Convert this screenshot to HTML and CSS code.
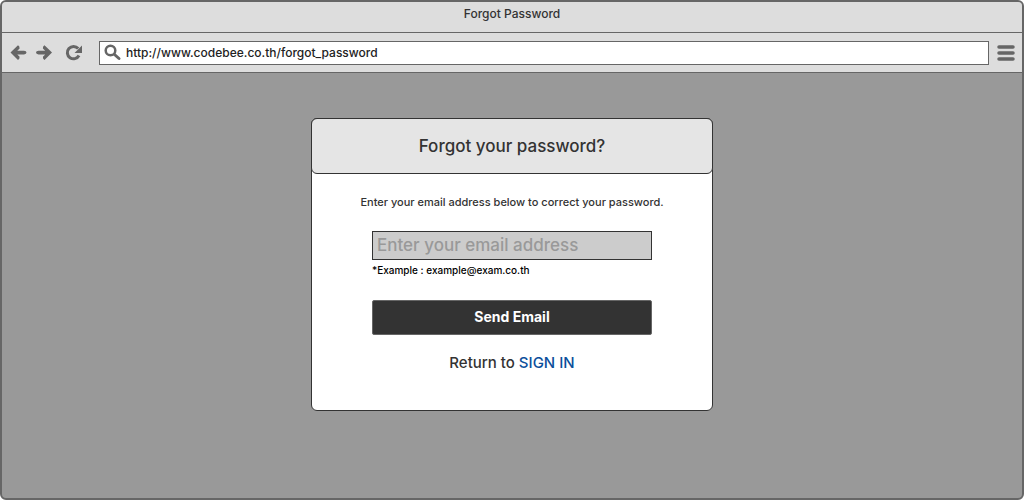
FILE: index.html
```
<!DOCTYPE html>
<html lang="en">
<head>
<meta charset="utf-8">
<title>Forgot Password</title>
<link rel="stylesheet" href="styles.css">
</head>
<body>
<div class="browser">
  <header class="titlebar">Forgot Password</header>
  <nav class="toolbar">
    <button class="tool" type="button" aria-label="Back">
      <svg width="18" height="18" viewBox="0 0 18 18"><path class="solid" d="M1.500 8.500 9 1.200q1.800 1 1.600 3.200L8.300 6.700H15q2.500.2 2.500 1.800T15 10.500H8.300l2.300 2.200q.2 2.200-1.600 3.200z"/></svg>
    </button>
    <button class="tool" type="button" aria-label="Forward">
      <svg width="18" height="18" viewBox="0 0 18 18"><path class="solid" d="M17 8.500 9.500 1.200q-1.800 1-1.600 3.200l2.300 2.300H3.500Q1 6.900 1 8.500t2.500 2h6.700l-2.300 2.200q-.2 2.200 1.600 3.200z"/></svg>
    </button>
    <button class="tool reload" type="button" aria-label="Reload">
      <svg width="18" height="18" viewBox="0 0 18 18"><path class="ring" d="M13.200 4.500A6.200 6.200 0 1 0 14 11.500"/><path class="solid" d="M17 1.500V9H9.500z"/></svg>
    </button>
    <label class="address">
      <svg width="18" height="18" viewBox="0 0 18 18"><circle class="lens" cx="6.500" cy="6.500" r="4.800"/><path class="handle" d="m10.500 10.500 4.500 4"/></svg>
      <input class="url" type="text" aria-label="Address" value="http://www.codebee.co.th/forgot_password">
    </label>
    <button class="tool" type="button" aria-label="Menu">
      <svg width="18" height="18" viewBox="0 0 18 18"><path class="bars" d="M2 3h14M2 9h14M2 15h14"/></svg>
    </button>
  </nav>
  <main class="page">
    <section class="card">
      <h1 class="heading">Forgot your password?</h1>
      <form class="form">
        <p class="intro">Enter your email address below to correct your password.</p>
        <input class="email" id="email" type="email" placeholder="Enter your email address">
        <label class="hint" for="email">*Example : example@exam.co.th</label>
        <button class="send" type="button">Send Email</button>
        <p class="return">Return to <a class="link" href="#">SIGN IN</a></p>
      </form>
    </section>
  </main>
</div>
</body>
</html>
```
FILE: styles.css
```
* { box-sizing: border-box; }
body {
  margin: 0;
  font-family: Inter, "Open Sans", sans-serif;
  font-weight: 500;
  color: #333;
}
.browser {
  display: flex;
  flex-direction: column;
  min-height: 100vh;
  border: 2px solid #666;
  border-radius: 6px;
  background: #999;
  overflow: hidden;
}
.titlebar {
  height: 31px;
  padding-top: 3px;
  border-bottom: 1px solid #666;
  background: #ddd;
  font-size: 12px;
  line-height: 18px;
  text-align: center;
}
.toolbar {
  display: flex;
  align-items: center;
  gap: 8px;
  height: 40px;
  padding: 0 7px;
  border-bottom: 1px solid #666;
  background: #ddd;
}
.tool {
  display: flex;
  padding: 0;
  border: 0;
  background: none;
}
.reload { margin: 0 8px 0 4px; }
.ring, .lens, .handle, .bars { fill: none; stroke: #666; }
.ring { stroke-width: 3; }
.solid { fill: #666; }
.lens { stroke-width: 2.500; }
.handle { stroke-width: 3; stroke-linecap: round; }
.bars { stroke-width: 3.500; stroke-linecap: round; }
.address {
  display: flex;
  flex: 1;
  align-items: center;
  gap: 4px;
  height: 24px;
  padding: 0 4px;
  border: 1px solid #666;
  background: #fff;
}
.url {
  flex: 1;
  min-width: 0;
  padding: 0;
  border: 0;
  outline: 0;
  background: none;
  color: #222;
  font: inherit;
  font-size: 12px;
}
.page {
  display: flex;
  flex: 1;
  flex-direction: column;
  align-items: center;
  padding: 45px 16px;
}
.card {
  width: 100%;
  max-width: 402px;
  border: 1px solid #333;
  border-radius: 6px;
  background: #fff;
}
.heading {
  margin: -1px;
  padding: 15px 0;
  border: 1px solid #333;
  border-radius: 6px;
  background: #e5e5e5;
  font-size: 17px;
  font-weight: 500;
  line-height: 24px;
  text-align: center;
}
.form {
  display: flex;
  flex-direction: column;
  padding: 20px 60px 36px;
}
.intro {
  margin: 0 -40px 20px;
  font-size: 11px;
  line-height: 18px;
  text-align: center;
}
.email {
  width: 100%;
  height: 29px;
  padding: 0 4px 2px;
  border: 1px solid #333;
  border-radius: 0;
  background: #ccc;
  color: #333;
  font: inherit;
  font-size: 17px;
}
.email::placeholder { color: #999; opacity: 1; }
.hint {
  margin: 2px 0 22px;
  color: #000;
  font-size: 10px;
  line-height: 16px;
}
.send {
  height: 35px;
  padding: 0 0 2px;
  border: 1px solid #666;
  border-radius: 2px;
  background: #333;
  color: #fff;
  font: inherit;
  font-size: 14px;
  font-weight: 700;
}
.return {
  margin: 17px 0 0;
  font-size: 15px;
  line-height: 22px;
  text-align: center;
}
.link { color: #0b4f9b; text-decoration: none; }
```
